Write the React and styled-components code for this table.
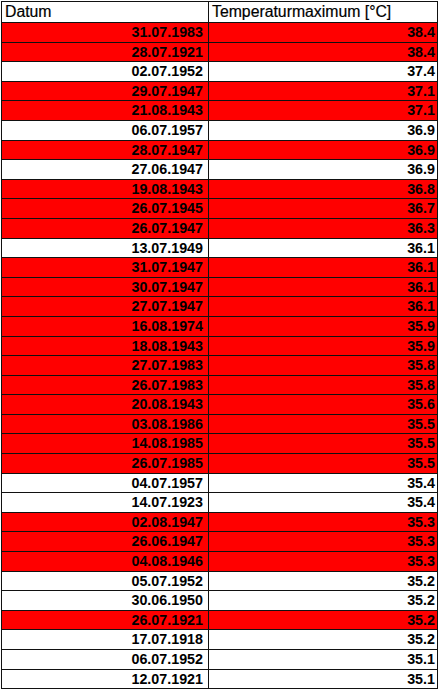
import React from "react";
import styled, { createGlobalStyle } from "styled-components";

const rows = [
  ["31.07.1983", "38.4", true],
  ["28.07.1921", "38.4", true],
  ["02.07.1952", "37.4", false],
  ["29.07.1947", "37.1", true],
  ["21.08.1943", "37.1", true],
  ["06.07.1957", "36.9", false],
  ["28.07.1947", "36.9", true],
  ["27.06.1947", "36.9", false],
  ["19.08.1943", "36.8", true],
  ["26.07.1945", "36.7", true],
  ["26.07.1947", "36.3", true],
  ["13.07.1949", "36.1", false],
  ["31.07.1947", "36.1", true],
  ["30.07.1947", "36.1", true],
  ["27.07.1947", "36.1", true],
  ["16.08.1974", "35.9", true],
  ["18.08.1943", "35.9", true],
  ["27.07.1983", "35.8", true],
  ["26.07.1983", "35.8", true],
  ["20.08.1943", "35.6", true],
  ["03.08.1986", "35.5", true],
  ["14.08.1985", "35.5", true],
  ["26.07.1985", "35.5", true],
  ["04.07.1957", "35.4", false],
  ["14.07.1923", "35.4", false],
  ["02.08.1947", "35.3", true],
  ["26.06.1947", "35.3", true],
  ["04.08.1946", "35.3", true],
  ["05.07.1952", "35.2", false],
  ["30.06.1950", "35.2", false],
  ["26.07.1921", "35.2", true],
  ["17.07.1918", "35.2", false],
  ["06.07.1952", "35.1", false],
  ["12.07.1921", "35.1", false],
];

const GlobalStyle = createGlobalStyle`
  html, body {
    margin: 0;
    padding: 0;
    background: #fff;
  }
  body {
    font-family: "Liberation Sans", Arial, sans-serif;
    color: #000;
  }
`;

const Sheet = styled.div`
  display: grid;
  grid-template-columns: 207px 229px;
  grid-template-rows: 21px;
  grid-auto-rows: 19.6px;
  margin: 1px 0 0 1px;
  width: max-content;
  border-left: 1px solid #111;
  border-top: 1px solid #111;
`;

const HeadCell = styled.div`
  box-sizing: border-box;
  border-right: 1px solid #111;
  border-bottom: 1px solid #111;
  background: #fff;
  font-size: 15.8px;
  line-height: 20px;
  padding: 0 0 0 3px;
  white-space: nowrap;
  overflow: hidden;
  -webkit-text-stroke: 0.2px #000;
`;

const Cell = styled.div`
  box-sizing: border-box;
  border-right: 1px solid #111;
  border-bottom: 1px solid #111;
  background: ${(p) => (p.$hot ? "#ff0000" : "#fff")};
  font-size: 14.3px;
  font-weight: bold;
  line-height: 18.6px;
  text-align: right;
  padding: 0 ${(p) => p.$pad}px 0 0;
  white-space: nowrap;
  overflow: hidden;
`;

export default function App() {
  return (
    <>
      <GlobalStyle />
      <Sheet>
        <HeadCell>Datum</HeadCell>
        <HeadCell>Temperaturmaximum [°C]</HeadCell>
        {rows.map(([date, temp, hot], i) => (
          <React.Fragment key={i}>
            <Cell $hot={hot} $pad={5}>
              {date}
            </Cell>
            <Cell $hot={hot} $pad={2}>
              {temp}
            </Cell>
          </React.Fragment>
        ))}
      </Sheet>
    </>
  );
}
